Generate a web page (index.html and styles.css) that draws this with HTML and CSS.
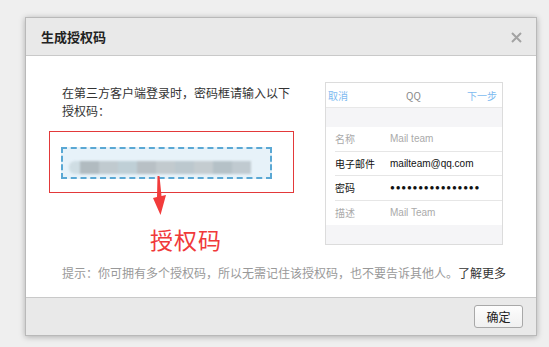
FILE: index.html
```html
<!DOCTYPE html>
<html lang="zh-CN">
<head>
<meta charset="utf-8">
<title>生成授权码</title>
<link rel="stylesheet" href="styles.css">
</head>
<body>
<div class="dialog">
  <div class="dlg-head">
    <span class="dlg-title">生成授权码</span>
    <svg class="dlg-close" width="11" height="11" viewBox="0 0 11 11"><path d="M1 1L10 10M10 1L1 10" stroke="#a3a3a3" stroke-width="2"/></svg>
  </div>
  <div class="dlg-body">
    <div class="content">
      <div class="left">
        <p class="intro">在第三方客户端登录时，密码框请输入以下授权码：</p>
        <div class="redbox">
          <div class="dashed">
            <div class="blur">
              <span></span><span></span><span></span><span></span><span></span><span></span><span></span><span></span><span></span><span></span>
            </div>
          </div>
          <svg class="arrow" width="20" height="42" viewBox="0 0 20 42"><path d="M5.5 0 L7.5 0 L9.5 20 L14 19 L8.5 39 L1 22 L5 21 Z" fill="#f23b3b"/></svg>
        </div>
        <div class="label-red">授权码</div>
      </div>
      <div class="phone">
        <div class="ph-head"><span class="ph-blue">取消</span><span class="ph-title">QQ</span><span class="ph-blue">下一步</span></div>
        <div class="ph-gap"></div>
        <div class="ph-rows">
          <div class="ph-row muted"><span class="ph-k">名称</span><span class="ph-v">Mail team</span></div>
          <div class="ph-row"><span class="ph-k">电子邮件</span><span class="ph-v">mailteam@qq.com</span></div>
          <div class="ph-row"><span class="ph-k">密码</span><span class="ph-v dots">●●●●●●●●●●●●●●●●</span></div>
          <div class="ph-row muted"><span class="ph-k">描述</span><span class="ph-v">Mail Team</span></div>
        </div>
      </div>
    </div>
    <p class="tip">提示：你可拥有多个授权码，所以无需记住该授权码，也不要告诉其他人。<a class="more">了解更多</a></p>
  </div>
  <div class="dlg-foot">
    <button class="btn">确定</button>
  </div>
</div>
</body>
</html>
```
FILE: styles.css
```css
* { box-sizing: border-box; }
html, body { margin: 0; padding: 0; }
body {
  background: #efefef;
  width: 549px;
  height: 347px;
  overflow: hidden;
  font-family: "Noto Sans CJK SC", "Liberation Sans", sans-serif;
  font-size: 12px;
  color: #333;
}
.dialog {
  margin: 17px 0 0 25px;
  width: 512px;
  height: 319px;
  background: #fff;
  border: 1px solid #b9b9b9;
  box-shadow: 0 1px 6px rgba(0,0,0,0.28);
  display: flex;
  flex-direction: column;
}
.dlg-head {
  height: 38px;
  flex: none;
  background: #e9e9e9;
  border-bottom: 1px solid #c9c9c9;
  display: flex;
  align-items: center;
  justify-content: space-between;
  padding: 0 14px 0 15px;
}
.dlg-title { font-size: 13px; font-weight: bold; color: #222; }
.dlg-close { display: block; margin-top: 1px; }
.dlg-body {
  flex: 1;
  padding: 26px 0 0 0;
}
.content {
  display: flex;
  padding-left: 23px;
}
.left {
  width: 245px;
  position: relative;
}
.intro {
  margin: 2px 0 0 0;
  padding: 0 0 0 13px;
  line-height: 18px;
  color: #333;
}
.redbox {
  margin-top: 11px;
  height: 62px;
  border: 1px solid #e3393a;
  padding: 15px 0 0 11px;
  position: relative;
}
.dashed {
  width: 211px;
  height: 32px;
  border: 2px dashed #5aa8d4;
  background: #e7f2f9;
  padding: 12px 0 0 6px;
}
.blur {
  display: flex;
  height: 13px;
  filter: blur(1px);
}
.blur span { width: 19px; height: 13px; background: #bfc9ce; }
.blur span:nth-child(1) { width: 11px; background: #cfdde3; border-radius: 6px 0 0 6px; }
.blur span:nth-child(2) { background: #b1bbc0; }
.blur span:nth-child(3) { background: #c0cacf; }
.blur span:nth-child(4) { background: #bfcfd6; }
.blur span:nth-child(5) { background: #b8c0c5; }
.blur span:nth-child(6) { background: #c2cace; }
.blur span:nth-child(7) { background: #bcc8ce; }
.blur span:nth-child(8) { background: #c4ccd0; }
.blur span:nth-child(9) { background: #b5c1c7; }
.blur span:nth-child(10) { background: #c0cad0; }
.arrow {
  position: absolute;
  left: 102px;
  top: 44px;
}
.label-red {
  margin: 31px 0 0 101px;
  font-size: 23px;
  line-height: 30px;
  color: #f0393a;
  letter-spacing: 1px;
}
.phone {
  margin-left: 31px;
  width: 178px;
  height: 163px;
  border: 1px solid #dcdcdc;
  background: #f5f5f7;
  font-size: 10px;
  display: flex;
  flex-direction: column;
}
.ph-head {
  height: 25px;
  background: #fff;
  border-bottom: 1px solid #e8e8e8;
  display: flex;
  align-items: center;
  justify-content: space-between;
  padding: 0 5px 0 2px;
}
.ph-blue { color: #7dbaf0; }
.ph-title { color: #888; margin-left: 12px; }
.ph-gap { height: 19px; }
.ph-rows { background: #fff; }
.ph-row {
  height: 24.5px;
  display: flex;
  align-items: center;
  margin-left: 9px;
  border-bottom: 1px solid #e6e6e6;
  color: #111;
}
.ph-row:last-child { border-bottom: none; }
.ph-row.muted { color: #aaa; }
.ph-k { width: 55px; }
.ph-v { font-family: "Liberation Sans", sans-serif; font-size: 10px; }
.dots { font-size: 8px; letter-spacing: 0.8px; }
.tip {
  margin: 10px 0 0 36px;
  line-height: 18px;
  color: #999;
}
.more { color: #333; text-decoration: none; }
.dlg-foot {
  height: 38px;
  flex: none;
  background: #e9e9e9;
  border-top: 1px solid #c9c9c9;
  display: flex;
  align-items: center;
  justify-content: flex-end;
  padding-right: 13px;
}
.btn {
  width: 49px;
  height: 23px;
  border: 1px solid #a8a8a8;
  border-radius: 3px;
  background: linear-gradient(#fdfdfd, #f0f0f0);
  font-family: "Noto Sans CJK SC", sans-serif;
  font-size: 12px;
  color: #222;
  padding: 0;
}
```
